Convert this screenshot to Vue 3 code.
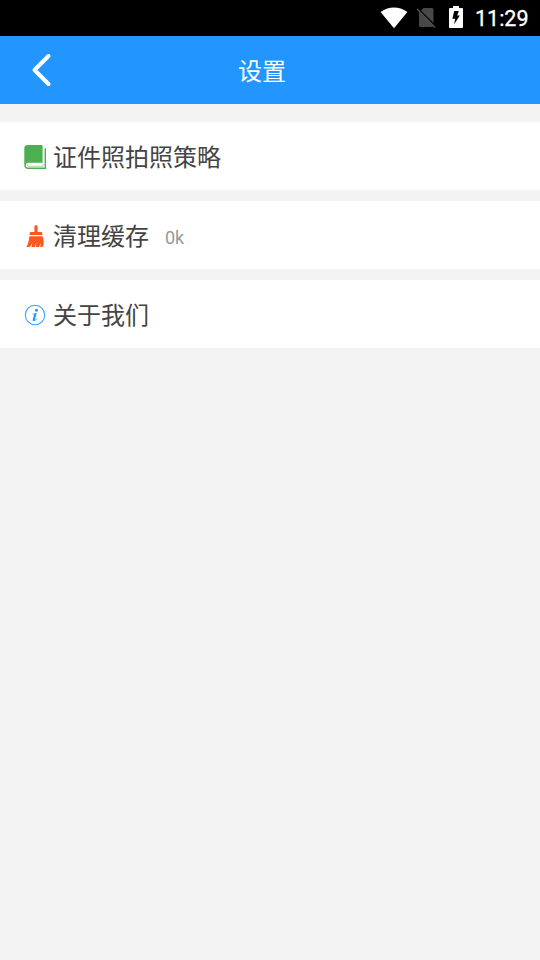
<script setup>
const rows = [
  { icon: 'book', label: '证件照拍照策略' },
  { icon: 'broom', label: '清理缓存', value: '0k' },
  { icon: 'info', label: '关于我们' },
]
</script>

<template>
  <div class="screen">
    <div class="status">
      <svg class="wifi" width="28" height="22" viewBox="0 0 28 22">
        <path d="M.6 5Q14-3.8 27.4 5L14 21.3Z" fill="#fff" />
      </svg>
      <svg class="sim" width="20" height="22" viewBox="0 0 20 22">
        <path d="M7.5 1H16q1.5 0 1.5 1.5V18q0 2-2 2H4.5q-1.5 0-1.5-1.5V5.5Z" fill="#484848" />
        <path d="M2.2 1.7 19.5 19" stroke="#000" stroke-width="1.5" fill="none" />
        <path d="M1 2 19 20.5" stroke="#505050" stroke-width="1.4" fill="none" />
      </svg>
      <svg class="battery" width="14" height="22" viewBox="0 0 14 22">
        <path d="M4 0h6v2h3q1 0 1 1v18q0 1-1 1H1q-1 0-1-1V3q0-1 1-1h3Z" fill="#fff" />
        <path d="M5.2 5H9.8L8.2 9.6H10.8L5 18.6 6.2 12.8H3.4Z" fill="#000" />
      </svg>
      <span class="time">11:29</span>
    </div>
    <header class="bar">
      <svg class="back" width="24" height="36" viewBox="0 0 24 36">
        <path d="M18.5 4 4.5 18 18.500 32" fill="none" stroke="#fff" stroke-width="4" stroke-linecap="round" stroke-linejoin="round" />
      </svg>
      <h1 class="title">设置</h1>
    </header>
    <main class="list">
      <div v-for="row in rows" :key="row.icon" class="row">
        <svg v-if="row.icon === 'book'" class="icon" width="24" height="24" viewBox="0 0 24 24">
          <path d="M3.5 0H17.5Q18.6 0 18.6 1.2V17.8H4.5Q2 17.8 1.7 20.2 1.7 22.6 4.3 22.6H20.6V3.2H22V24H4Q.3 24 .3 20V3.5Q.3 0 3.5 0Z" fill="#4caf50" />
          <path d="M19 19V21.3H4.5Q3.4 21.3 3.4 20.2T4.5 19" stroke="#4caf50" stroke-width=".5" fill="none" />
        </svg>
        <svg v-else-if="row.icon === 'broom'" class="icon" width="24" height="24" viewBox="0 0 24 24">
          <path d="M10.4 8V2.6Q10.4 1 12 1T13.6 2.6V8H17Q18.4 8 18.4 9.3V11H5.6V9.3Q5.6 8 7 8Z" fill="#ff5722" />
          <path d="M5.4 12.2H18.7Q20 17 19.7 20.5 19.5 23 17.8 23H16.2L16.7 19.3 15 23H11.8L12.3 19.3 10.7 23H7.4L8.2 19.3 5.8 23H2.3Q4.4 20.5 5.4 12.2Z" fill="#ff5722" />
        </svg>
        <svg v-else class="icon" width="24" height="24" viewBox="0 0 24 24">
          <circle cx="11" cy="12" r="9.7" fill="none" stroke="#3ba2f8" stroke-width="1.1" />
          <circle cx="12.5" cy="7.2" r="1.5" fill="#2196f3" />
          <path d="M8.6 10.7 12.8 9.9 10.8 16.5Q10.7 17.4 12.9 15.2L13.3 15.6Q11.5 18.2 9.5 18.1 8.3 18 8.8 16.2L10.2 11.5 8.5 11.2Z" fill="#2196f3" />
        </svg>
        <span class="label">{{ row.label }}</span>
        <span v-if="row.value" class="value">{{ row.value }}</span>
      </div>
    </main>
  </div>
</template>

<style>
body {
  background: #f3f3f3;
}
</style>

<style scoped>
.screen {
  min-height: 960px;
  background: #f3f3f3;
  font-family: "Noto Sans CJK SC", sans-serif;
}
.status {
  display: flex;
  align-items: center;
  justify-content: flex-end;
  height: 36px;
  padding-right: 11px;
  box-sizing: border-box;
  background: #000;
}
.wifi {
  margin-top: -1px;
}
.sim {
  margin-left: 8px;
}
.battery {
  margin: 0 12px 2px 13px;
}
.time {
  width: 54px;
  white-space: nowrap;
  color: #fff;
  font: 400 21.5px/36px Roboto, sans-serif;
  padding-top: 1px;
  -webkit-text-stroke: 0.3px #fff;
}
.bar {
  display: grid;
  grid-template-columns: 60px 1fr 60px;
  align-items: center;
  height: 68px;
  background: #2295ff;
}
.back {
  margin-left: 30px;
}
.title {
  margin: 0;
  text-align: center;
  color: #fff;
  font-size: 24px;
  font-weight: 400;
  line-height: 68px;
  padding-right: 16px;
}
.list {
  display: flex;
  flex-direction: column;
  gap: 11px;
  padding-top: 18px;
}
.row {
  display: flex;
  align-items: center;
  height: 68px;
  padding-left: 24px;
  background: #fff;
}
.icon {
  margin-top: 2px;
}
.label {
  margin-left: 5px;
  color: #444;
  font-size: 24px;
  line-height: 68px;
}
.value {
  margin-left: 16px;
  padding-top: 5px;
  color: #999;
  font: 18px/24px Roboto, sans-serif;
}
</style>
